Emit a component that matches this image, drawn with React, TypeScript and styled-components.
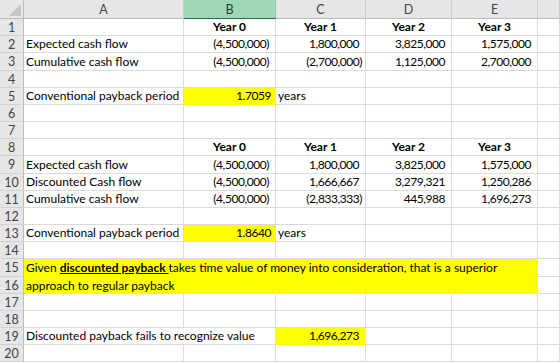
import React from 'react';
import styled, { createGlobalStyle } from 'styled-components';

const Global = createGlobalStyle`
  html, body { margin: 0; padding: 0; background: #fff; overflow: hidden; }
  body { font-family: Lato, "Liberation Sans", sans-serif; }
`;

const ROW_HEIGHTS = [17, 17, 18, 17, 17, 17, 17, 17, 18, 17, 17, 17, 17, 17, 18, 17, 17, 17, 17, 17];

const Sheet = styled.div`
  display: grid;
  grid-template-columns: 24px 160px 92px 90px 86px 86px 22px;
  grid-template-rows: 19px ${ROW_HEIGHTS.map((h) => `${h}px`).join(' ')};
  width: 560px;
  height: 363px;
  overflow: hidden;
  font-family: Lato, "Liberation Sans", sans-serif;
  font-size: 12px;
  color: #000;
`;

const Corner = styled.div`
  position: relative;
  background: #e6e6e6;
  border-right: 1px solid #bcbcbc;
  border-bottom: 1px solid #bcbcbc;
  box-sizing: border-box;
  &::after {
    content: '';
    position: absolute;
    right: 2px;
    bottom: 2px;
    width: 0;
    height: 0;
    border-left: 12px solid transparent;
    border-bottom: 12px solid #c6c6c6;
  }
`;

const ColHead = styled.div<{ $selected?: boolean }>`
  box-sizing: border-box;
  display: flex;
  align-items: center;
  justify-content: center;
  background: ${(p) => (p.$selected ? '#a0d6b8' : '#e6e6e6')};
  border-right: 1px solid ${(p) => (p.$selected ? '#8cc7a6' : '#cfcfcf')};
  border-bottom: 1px solid ${(p) => (p.$selected ? '#217346' : '#bcbcbc')};
  color: ${(p) => (p.$selected ? '#1f3f2d' : '#444')};
  font-size: 12.5px;
`;

const RowHead = styled.div`
  box-sizing: border-box;
  display: flex;
  align-items: center;
  justify-content: center;
  background: #e6e6e6;
  border-right: 1px solid #bcbcbc;
  border-bottom: 1px solid #d2d2d2;
  color: #444;
  font-size: 12.5px;
`;

type Align = 'left' | 'right' | 'center';

const Cell = styled.div<{ $align?: Align; $bold?: boolean; $fill?: string; $pr?: number; $span?: number; $num?: boolean }>`
  box-sizing: border-box;
  display: flex;
  align-items: center;
  justify-content: ${(p) => (p.$align === 'right' ? 'flex-end' : p.$align === 'center' ? 'center' : 'flex-start')};
  grid-column: span ${(p) => p.$span ?? 1};
  padding: 0 ${(p) => p.$pr ?? 2}px 0 2px;
  background: ${(p) => p.$fill ?? '#fff'};
  border-right: 1px solid ${(p) => p.$fill ?? '#dadada'};
  border-bottom: 1px solid ${(p) => p.$fill ?? '#dadada'};
  font-weight: ${(p) => (p.$bold ? 700 : 400)};
  letter-spacing: ${(p) => (p.$num ? '-0.45px' : '0')};
  white-space: nowrap;
  line-height: 16px;
`;

const Note = styled.div`
  box-sizing: border-box;
  grid-column: span 5;
  grid-row: span 2;
  display: flex;
  flex-direction: column;
  padding: 0 2px;
  background: #ffff00;
  white-space: nowrap;
`;

const NoteLine = styled.div<{ $h: number }>`
  height: ${(p) => p.$h}px;
  display: flex;
  align-items: center;
  line-height: 16px;
`;

const Emph = styled.span`
  font-weight: 700;
  text-decoration: underline;
  white-space: pre;
`;

type Spec = { t?: string; a?: Align; b?: boolean; fill?: string; pr?: number; span?: number; num?: boolean };

const YELLOW = '#ffff00';
const empty: Spec = {};
const head = (t: string): Spec => ({ t, a: 'center', b: true });
const num = (t: string, pr = 6): Spec => ({ t, a: 'right', pr, num: true });

const yearsRow: Spec[] = [empty, head('Year 0'), head('Year 1'), head('Year 2'), head('Year 3'), empty];
const blank: Spec[] = [empty, empty, empty, empty, empty, empty];

const ROWS: (Spec[] | 'note1' | 'note2')[] = [
  yearsRow,
  [{ t: 'Expected cash flow' }, num('(4,500,000)'), num('1,800,000'), num('3,825,000'), num('1,575,000'), empty],
  [{ t: 'Cumulative cash flow' }, num('(4,500,000)'), num('(2,700,000)', 3), num('1,125,000'), num('2,700,000'), empty],
  blank,
  [{ t: 'Conventional payback period' }, { t: '1.7059', a: 'right', pr: 4, fill: YELLOW, num: true }, { t: 'years' }, empty, empty, empty],
  blank,
  blank,
  yearsRow,
  [{ t: 'Expected cash flow' }, num('(4,500,000)'), num('1,800,000'), num('3,825,000'), num('1,575,000'), empty],
  [{ t: 'Discounted Cash flow' }, num('(4,500,000)'), num('1,666,667'), num('3,279,321'), num('1,250,286'), empty],
  [{ t: 'Cumulative cash flow' }, num('(4,500,000)'), num('(2,833,333)', 3), num('445,988'), num('1,696,273'), empty],
  blank,
  [{ t: 'Conventional payback period' }, { t: '1.8640', a: 'right', pr: 4, fill: YELLOW, num: true }, { t: 'years' }, empty, empty, empty],
  blank,
  'note1',
  'note2',
  blank,
  blank,
  [{ t: 'Discounted payback fails to recognize value', span: 2 }, { t: '1,696,273', a: 'right', pr: 6, fill: YELLOW, num: true }, empty, empty, empty],
  blank,
];

const COLS = ['A', 'B', 'C', 'D', 'E', ''];

export default function App() {
  return (
    <>
      <Global />
      <Sheet>
        <Corner />
        {COLS.map((c, i) => (
          <ColHead key={`h${i}`} $selected={c === 'B'}>
            {c}
          </ColHead>
        ))}
        {ROWS.map((row, r) => {
          const n = r + 1;
          if (row === 'note1') {
            return (
              <React.Fragment key={n}>
                <RowHead>{n}</RowHead>
                <Note>
                  <NoteLine $h={ROW_HEIGHTS[r]}>
                    Given&nbsp;<Emph>discounted payback </Emph>takes time value of money into consideration, that is a superior
                  </NoteLine>
                  <NoteLine $h={ROW_HEIGHTS[r + 1]}>approach to regular payback</NoteLine>
                </Note>
                <Cell />
              </React.Fragment>
            );
          }
          if (row === 'note2') {
            return (
              <React.Fragment key={n}>
                <RowHead>{n}</RowHead>
                <Cell />
              </React.Fragment>
            );
          }
          return (
            <React.Fragment key={n}>
              <RowHead>{n}</RowHead>
              {row.map((s, i) => (
                <Cell key={i} $align={s.a} $bold={s.b} $fill={s.fill} $pr={s.pr} $span={s.span} $num={s.num}>
                  {s.t}
                </Cell>
              ))}
            </React.Fragment>
          );
        })}
      </Sheet>
    </>
  );
}
